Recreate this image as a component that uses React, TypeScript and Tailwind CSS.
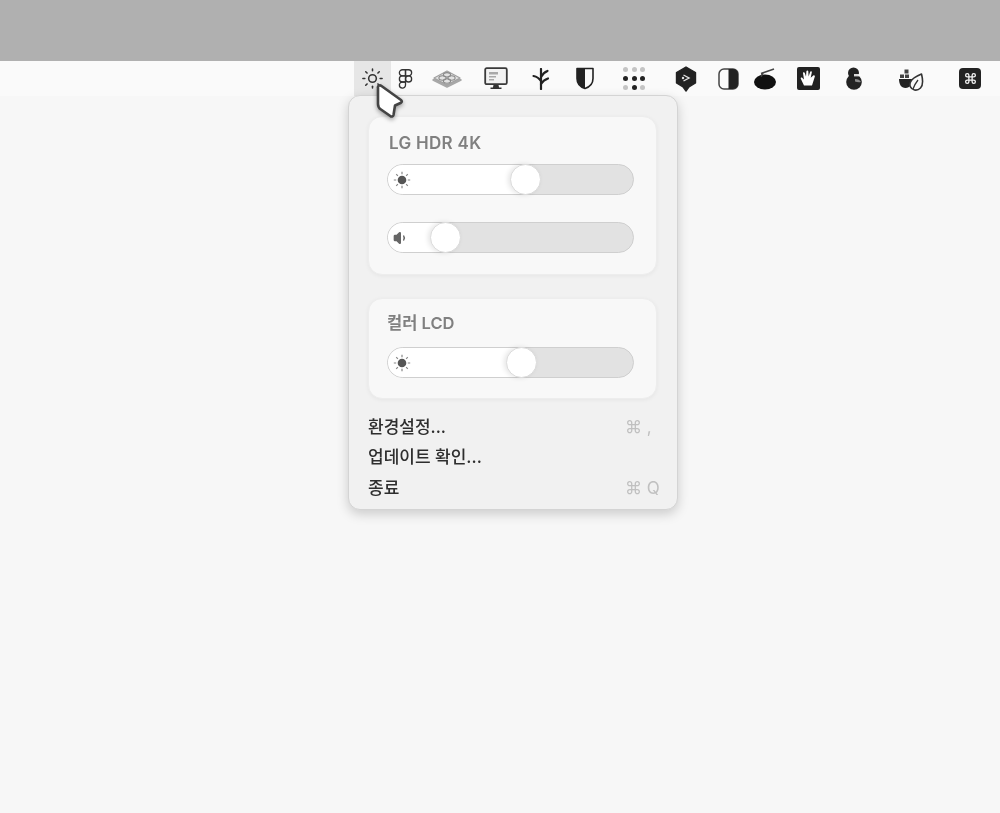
import { Command, Figma, Sun, Volume1 } from "lucide-react";

const font = { fontFamily: '"Inter", "Noto Sans CJK KR", "Noto Sans", sans-serif' };

function Layers() {
  return (
    <svg width="30" height="20" viewBox="0 0 30 20" fill="none">
      <path d="M15 4 29 11 15 18 1 11z" fill="#a8a8a8" stroke="#a8a8a8" strokeWidth="1.5" strokeLinejoin="round" />
      <path d="M15 2 28 9 15 16 2 9z" fill="#e2e2e2" stroke="#a0a0a0" strokeWidth="1.2" strokeLinejoin="round" />
      <ellipse cx="15" cy="5.8" rx="3.6" ry="2.2" stroke="#8a8a8a" strokeWidth="1.1" />
      <ellipse cx="15" cy="12" rx="3.6" ry="2.2" stroke="#8a8a8a" strokeWidth="1.1" />
      <ellipse cx="10.5" cy="9" rx="3.6" ry="2.2" stroke="#8a8a8a" strokeWidth="1.1" />
      <ellipse cx="19.5" cy="9" rx="3.6" ry="2.2" stroke="#8a8a8a" strokeWidth="1.1" />
    </svg>
  );
}

function Monitor() {
  return (
    <svg width="24" height="23" viewBox="0 0 24 23" fill="none">
      <rect x="1.2" y="1.2" width="21.6" height="16" rx="1.5" fill="#f2f2f2" stroke="#3a3a3a" strokeWidth="1.8" />
      <path d="M5 5h9v2.400H5zM5 9h7v1.600H5zM5 12h5v1.400H5z" fill="#a8a8a8" />
      <path d="M9.500 18h5l.6 2.500h2.400v1.600h-11v-1.600h2.400z" fill="#333" />
    </svg>
  );
}

function Sprout() {
  return (
    <svg width="18" height="22" viewBox="0 0 18 22" fill="none" stroke="#222" strokeWidth="2.2" strokeLinecap="round">
      <path d="M9 1v20" />
      <path d="M9 13C7 10 4 8.500 1.500 8" />
      <path d="M9 9c1.500-3 4-5 6.500-6" />
      <path d="M9 16c1.500-2.500 4-4.500 7-5.500" />
    </svg>
  );
}

function Shield() {
  return (
    <svg width="18" height="23" viewBox="0 0 18 23" fill="none">
      <path d="M1 1.500h16v10c0 5-3.500 8.500-8 10-4.500-1.500-8-5-8-10z" fill="#fafafa" stroke="#222" strokeWidth="1.600" strokeLinejoin="round" />
      <path d="M1 1.500h8v20c-4.500-1.500-8-5-8-10z" fill="#222" />
    </svg>
  );
}

function Dots() {
  const dots = ["#c4c4c4", "#c4c4c4", "#c4c4c4", "#222", "#222", "#222", "#c4c4c4", "#222", "#c4c4c4"];
  return (
    <div className="grid grid-cols-3 gap-x-[3.500px] gap-y-[4px]">
      {dots.map((c, i) => (
        <span key={i} className="w-[5px] h-[5px] rounded-full" style={{ backgroundColor: c }} />
      ))}
    </div>
  );
}

function Hex() {
  return (
    <svg width="22" height="26" viewBox="0 0 22 26" fill="none">
      <path d="M11 1 20.500 6.500v10.500L14 20.800 11 25 8 20.800 1.500 17V6.500z" fill="#222" stroke="#222" strokeWidth="1.400" strokeLinejoin="round" />
      <path d="M8.500 9 14 12l-5.500 3" stroke="#e4e4e4" strokeWidth="1.400" />
      <circle cx="8" cy="12" r="1.200" fill="#e4e4e4" />
    </svg>
  );
}

function Contrast() {
  return (
    <svg width="21" height="22" viewBox="0 0 21 22" fill="none">
      <rect x="1" y="1" width="19" height="20" rx="5" fill="#fafafa" stroke="#444" strokeWidth="1.500" />
      <path d="M10.500 1H15a5 5 0 0 1 5 5v10a5 5 0 0 1-5 5h-4.500z" fill="#222" />
    </svg>
  );
}

function Bowl() {
  return (
    <svg width="24" height="22" viewBox="0 0 24 22" fill="none">
      <ellipse cx="12" cy="14" rx="11" ry="7.500" fill="#111" />
      <path d="M8 5.500 21 1" stroke="#444" strokeWidth="1.400" />
      <path d="M8 8.500 10 5" stroke="#444" strokeWidth="1.600" />
    </svg>
  );
}

function Hand() {
  return (
    <svg width="23" height="23" viewBox="0 0 23 23">
      <rect width="23" height="23" rx="2" fill="#222" />
      <path
        d="M7 18.500 3.800 11.800c-.5-1 .9-1.700 1.600-.9L7 12.600 6 6.200c-.2-1.200 1.500-1.500 1.800-.3L9 9.500l.4-5.200c.1-1.200 1.800-1.200 1.900 0l.3 5.200 1.500-4.600c.4-1.100 2-.7 1.700.5l-1.100 5.400 2.600-2.200c.9-.8 2.100.3 1.400 1.300L15 18.500z"
        fill="#fff"
      />
    </svg>
  );
}

function Duck() {
  return (
    <svg width="20" height="23" viewBox="0 0 20 23">
      <circle cx="9.500" cy="6" r="5.500" fill="#222" />
      <circle cx="10" cy="15" r="7.800" fill="#222" />
      <path d="M10 7h8v2.400h-8z" fill="#fafafa" opacity="0.85" />
      <path d="M11 12c3 0 5 1 6 3-2 .5-4 .3-6-.5z" fill="#8a8a8a" />
    </svg>
  );
}

function LeafBowl() {
  return (
    <svg width="28" height="24" viewBox="0 0 28 24" fill="none">
      <path d="M1 12h13c0 5-2 9-6.500 9S1 17 1 12z" fill="#222" />
      <path d="M2 7.500h4v3.500H2zM7 7.500h4v3.500H7zM6.500 2.500h4v4h-4z" fill="#444" />
      <path d="M16.500 23c-4-1-5.500-4.500-4-8 1-3 5-5.500 11-8 1.500 6 2 11-1 14-1.500 1.500-3.500 2.500-6 2z" fill="#fafafa" stroke="#333" strokeWidth="1.600" strokeLinejoin="round" />
      <path d="M15 22c1.500-4 3-6.500 5-9" stroke="#333" strokeWidth="1.300" />
    </svg>
  );
}

const menuIcons = [
  { w: "w-[28px]", icon: <Figma className="w-[21px] h-[21px]" color="#333" strokeWidth={1.5} /> },
  { w: "w-[56px]", icon: <Layers /> },
  { w: "w-[42px]", icon: <Monitor /> },
  { w: "w-[48px]", icon: <Sprout /> },
  { w: "w-[40px]", icon: <Shield /> },
  { w: "w-[58px]", icon: <Dots /> },
  { w: "w-[46px]", icon: <Hex /> },
  { w: "w-[38px]", icon: <Contrast /> },
  { w: "w-[36px]", icon: <Bowl /> },
  { w: "w-[50px]", icon: <Hand /> },
  { w: "w-[42px]", icon: <Duck /> },
  { w: "w-[74px]", icon: <LeafBowl /> },
  {
    w: "w-[42px]",
    icon: (
      <span className="w-[22px] h-[21px] rounded-[4px] bg-[#222] flex items-center justify-center">
        <Command className="w-[13px] h-[13px]" color="#f5f5f5" strokeWidth={2.4} />
      </span>
    ),
  },
];

function BrightnessIcon() {
  return (
    <svg width="18" height="18" viewBox="0 0 18 18" fill="none">
      <circle cx="9" cy="9" r="4.300" fill="#555" />
      <path
        d="M9 .8v2.400M9 14.800v2.400M.8 9h2.400M14.800 9h2.400M3.200 3.200l1.700 1.700M13.100 13.100l1.700 1.700M3.200 14.800l1.700-1.700M13.100 4.900l1.700-1.700"
        stroke="#888"
        strokeWidth="1.200"
      />
    </svg>
  );
}

function Slider({ value, icon }: { value: number; icon: React.ReactNode }) {
  return (
    <div className="relative h-[31px] w-[247px] rounded-full bg-[#e2e2e2] border border-[#cfcfcf]">
      <div className="absolute left-0 top-0 bottom-0 rounded-l-full bg-white" style={{ width: value }} />
      <div className="absolute left-[5px] top-0 bottom-0 flex items-center">{icon}</div>
      <div
        className="absolute top-[-1px] w-[31px] h-[31px] -ml-[16px] rounded-full bg-white border border-[#dcdcdc] shadow-[-2px_0_5px_rgba(0,0,0,0.1)]"
        style={{ left: value }}
      />
    </div>
  );
}

function MenuRow({ label, shortcut }: { label: string; shortcut?: string }) {
  return (
    <div className="flex items-center justify-between h-[30.500px] pl-[19px] pr-[16px]">
      <span className="text-[17px] font-medium text-[#2e2e2e]">{label}</span>
      {shortcut && <span className="w-[36px] text-[17px] text-[#c0c0c0] whitespace-pre">{shortcut}</span>}
    </div>
  );
}

export default function App() {
  return (
    <div className="min-h-screen bg-[#f7f7f7] overflow-hidden blur-[0.5px]" style={font}>
      <div className="h-[61px] bg-[#b0b0b0]" />
      <div className="relative h-[35px] bg-[#fafafa] flex items-center pl-[354px]">
        <div className="w-[37px] h-[35px] bg-[#e6e6e6] flex items-center justify-center">
          <Sun className="w-[23px] h-[23px]" color="#333" strokeWidth={1.6} />
        </div>
        {menuIcons.map((m, i) => (
          <div key={i} className={`${m.w} flex items-center justify-center`}>
            {m.icon}
          </div>
        ))}

        <div className="absolute left-[348px] top-[34px] w-[330px] h-[415px] rounded-[12px] bg-[#f1f1f1] border border-[#d4d4d4] shadow-[0_4px_12px_rgba(0,0,0,0.18)] pt-[20px]">
          <div className="ml-[19px] w-[289px] h-[159px] rounded-[14px] bg-[#f8f8f8] border border-[#ededed] shadow-[0_1px_4px_rgba(0,0,0,0.05)] pl-[18px] pt-[16px]">
            <div className="pl-[2px] h-[22px] mb-[9px] flex items-center text-[17px] tracking-[0.3px] font-semibold text-[#808080]">
              LG HDR 4K
            </div>
            <Slider value={138} icon={<BrightnessIcon />} />
            <div className="h-[27px]" />
            <Slider value={58} icon={<Volume1 className="w-[16px] h-[16px]" color="#666" fill="#666" />} />
          </div>
          <div className="ml-[19px] mt-[23px] w-[289px] h-[101px] rounded-[14px] bg-[#f8f8f8] border border-[#ededed] shadow-[0_1px_4px_rgba(0,0,0,0.05)] pl-[18px] pt-[13px]">
            <div className="h-[22px] mb-[13px] flex items-center text-[16.500px] font-semibold text-[#808080]">컬러 LCD</div>
            <Slider value={134} icon={<BrightnessIcon />} />
          </div>
          <div className="mt-[13px]">
            <MenuRow label="환경설정..." shortcut="⌘ ," />
            <MenuRow label="업데이트 확인..." />
            <MenuRow label="종료" shortcut="⌘ Q" />
          </div>
        </div>

        <svg className="absolute left-[374px] top-[22px] drop-shadow-[0_2px_2px_rgba(0,0,0,0.35)]" width="30" height="36" viewBox="0 0 30 36" fill="none">
          <path
            d="M4 5c-.5-2 1.500-3.500 3.500-2L27 17c1.200 1 1 2 0 2.700L21 22.500 19.500 32c-.3 1.500-2 2-3.200 1L7 26.500C4.500 25 4 23.500 4 21z"
            fill="#fff"
            stroke="#444"
            strokeWidth="2.600"
            strokeLinejoin="round"
          />
        </svg>
      </div>
    </div>
  );
}
